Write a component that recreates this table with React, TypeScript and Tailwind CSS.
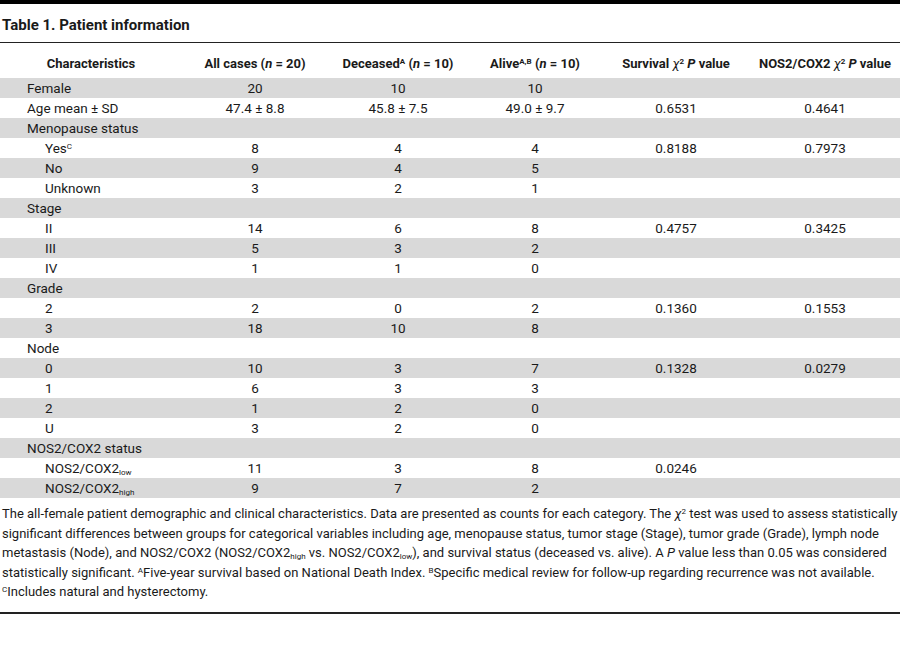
const rows: { label: string; indent?: boolean; sub?: string; sup?: string; v: string[] }[] = [
  { label: "Female", v: ["20", "10", "10", "", ""] },
  { label: "Age mean ± SD", v: ["47.4 ± 8.8", "45.8 ± 7.5", "49.0 ± 9.7", "0.6531", "0.4641"] },
  { label: "Menopause status", v: ["", "", "", "", ""] },
  { label: "Yes", sup: "C", indent: true, v: ["8", "4", "4", "0.8188", "0.7973"] },
  { label: "No", indent: true, v: ["9", "4", "5", "", ""] },
  { label: "Unknown", indent: true, v: ["3", "2", "1", "", ""] },
  { label: "Stage", v: ["", "", "", "", ""] },
  { label: "II", indent: true, v: ["14", "6", "8", "0.4757", "0.3425"] },
  { label: "III", indent: true, v: ["5", "3", "2", "", ""] },
  { label: "IV", indent: true, v: ["1", "1", "0", "", ""] },
  { label: "Grade", v: ["", "", "", "", ""] },
  { label: "2", indent: true, v: ["2", "0", "2", "0.1360", "0.1553"] },
  { label: "3", indent: true, v: ["18", "10", "8", "", ""] },
  { label: "Node", v: ["", "", "", "", ""] },
  { label: "0", indent: true, v: ["10", "3", "7", "0.1328", "0.0279"] },
  { label: "1", indent: true, v: ["6", "3", "3", "", ""] },
  { label: "2", indent: true, v: ["1", "2", "0", "", ""] },
  { label: "U", indent: true, v: ["3", "2", "0", "", ""] },
  { label: "NOS2/COX2 status", v: ["", "", "", "", ""] },
  { label: "NOS2/COX2", sub: "low", indent: true, v: ["11", "3", "8", "0.0246", ""] },
  { label: "NOS2/COX2", sub: "high", indent: true, v: ["9", "7", "2", "", ""] },
];

const cols = "grid grid-cols-[182px_146px_140px_134px_148px_150px]";

const Chi = () => (
  <>
    <i className="font-normal">χ</i>
    <sup className="text-[8px]">2</sup>
  </>
);

export default function App() {
  return (
    <div className="w-[900px] bg-white text-[#1a1a1a] font-['Roboto','Liberation_Sans',sans-serif]">
      <div className="h-[4px] bg-black" />
      <h1 className="px-[2px] pt-[11px] text-[15px] leading-[20px] font-bold">Table 1. Patient information</h1>
      <div className="mt-[7px] h-px bg-[#222]" />

      <div className={`${cols} h-[35px] pt-[11px] text-[13px] leading-[20px] font-bold text-center`}>
        <div>Characteristics</div>
        <div>
          All cases (<i>n</i> = 20)
        </div>
        <div>
          Deceased<sup className="text-[8px]">A</sup> (<i>n</i> = 10)
        </div>
        <div>
          Alive<sup className="text-[8px]">A,B</sup> (<i>n</i> = 10)
        </div>
        <div>
          Survival <Chi /> <i>P</i> value
        </div>
        <div>
          NOS2/COX2 <Chi /> <i>P</i> value
        </div>
      </div>

      <div className="text-[13.5px] leading-[20px]">
        {rows.map((r, i) => (
          <div key={i} className={`${cols} h-[20px] ${i % 2 === 0 ? "bg-[#d9d9d9]" : "bg-white"}`}>
            <div className={r.indent ? "pl-[45px]" : "pl-[27px]"}>
              {r.label}
              {r.sup && <sup className="text-[8px]">{r.sup}</sup>}
              {r.sub && <sub className="text-[8px]">{r.sub}</sub>}
            </div>
            {r.v.map((v, j) => (
              <div key={j} className="text-center">
                {v}
              </div>
            ))}
          </div>
        ))}
      </div>

      <div className="mt-[6px] px-[2px] text-[13px] leading-[19.5px] whitespace-nowrap">
        <div>
          The all-female patient demographic and clinical characteristics. Data are presented as counts for each category. The <Chi /> test was used to assess statistically
        </div>
        <div>
          significant differences between groups for categorical variables including age, menopause status, tumor stage (Stage), tumor grade (Grade), lymph node
        </div>
        <div>
          metastasis (Node), and NOS2/COX2 (NOS2/COX2<sub className="text-[8px]">high</sub> vs. NOS2/COX2<sub className="text-[8px]">low</sub>), and survival status (deceased vs. alive). A <i>P</i> value less than 0.05 was considered
        </div>
        <div>
          statistically significant. <sup className="text-[8px]">A</sup>Five-year survival based on National Death Index. <sup className="text-[8px]">B</sup>Specific medical review for follow-up regarding recurrence was not available.
        </div>
        <div>
          <sup className="text-[8px]">C</sup>Includes natural and hysterectomy.
        </div>
      </div>
      <div className="mt-[10px] h-[2px] bg-[#222]" />
    </div>
  );
}
